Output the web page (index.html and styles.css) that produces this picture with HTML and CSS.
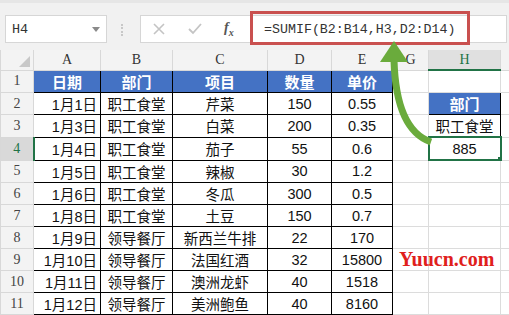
FILE: index.html
```html
<!DOCTYPE html>
<html lang="zh-CN">
  <head>
    <meta charset="UTF-8" />
    <title>SUMIF</title>
    <link rel="stylesheet" href="styles.css">
  </head>
  <body>
    <div class="toolbar">
      <div class="namebox">
        <span>H4</span>
        <span class="caret"></span>
      </div>
      <div class="sep"></div>
      <div class="fbar">
        <div class="ficons">
          <svg width="14" height="14" viewBox="0 0 14 14"><path d="M2 2L12 12M12 2L2 12" stroke="#c4c4c4" stroke-width="1.6" fill="none"/></svg>
          <svg width="16" height="14" viewBox="0 0 16 14"><path d="M2 7L6 11L14 2" stroke="#c4c4c4" stroke-width="1.8" fill="none"/></svg>
          <span class="fx">f<sub>x</sub></span>
        </div>
        <div class="formula">=SUMIF(B2:B14,H3,D2:D14)</div>
      </div>
    </div>
    <div class="redbox"></div>

    <table class="sheet">
      <colgroup>
        <col style="width:33px"><col style="width:67px"><col style="width:72px"><col style="width:95px">
        <col style="width:64px"><col style="width:61px"><col style="width:36px"><col style="width:72px"><col style="width:9px">
      </colgroup>
      <thead>
        <tr>
          <th class="corner"><span class="tri"></span></th>
          <th>A</th><th>B</th><th>C</th><th>D</th><th>E</th><th>G</th><th class="cur">H</th><th></th>
        </tr>
      </thead>
      <tbody id="rows"></tbody>
    </table>

    <svg class="arrow" width="509" height="315" viewBox="0 0 509 315">
      <path d="M431 142 Q396 130 394 60" stroke="#6aab3c" stroke-width="7" fill="none"/>
      <polygon points="394,41 380,62 408,62" fill="#6aab3c"/>
    </svg>
    <div class="mark">Yuucn.com</div>

    <script>
      const data = [
        ["1月1日", "职工食堂", "芹菜", 150, 0.55],
        ["1月3日", "职工食堂", "白菜", 200, 0.35],
        ["1月4日", "职工食堂", "茄子", 55, 0.6],
        ["1月5日", "职工食堂", "辣椒", 30, 1.2],
        ["1月6日", "职工食堂", "冬瓜", 300, 0.5],
        ["1月8日", "职工食堂", "土豆", 150, 0.7],
        ["1月9日", "领导餐厅", "新西兰牛排", 22, 170],
        ["1月10日", "领导餐厅", "法国红酒", 32, 15800],
        ["1月11日", "领导餐厅", "澳洲龙虾", 40, 1518],
        ["1月12日", "领导餐厅", "美洲鲍鱼", 40, 8160],
        ["", "", "", "", ""],
      ];
      const side = { 2: ["hd", "部门"], 3: ["val", "职工食堂"], 4: ["sel", "885"] };

      let html = "";
      for (let r = 1; r <= 12; r++) {
        const head = r === 1;
        const row = head ? ["日期", "部门", "项目", "数量", "单价"] : data[r - 2];
        const cls = head ? "hd" : "d";
        // row 12 only peeks in at the bottom edge, so no label
        html += `<tr><td class="rn${r === 4 ? " cur" : ""}">${r < 12 ? r : ""}</td>`;
        html += `<td class="${cls} ${head ? "" : "right"}">${row[0]}</td>`;
        for (let c = 1; c < 5; c++) html += `<td class="${cls}">${row[c]}</td>`;
        html += `<td></td>`;
        const s = side[r];
        if (s) {
          html += `<td class="${s[0]}">${s[1]}${s[0] === "sel" ? '<span class="handle"></span>' : ""}</td>`;
        } else {
          html += `<td></td>`;
        }
        html += `<td></td></tr>`;
      }
      document.getElementById("rows").innerHTML = html;
    </script>
  </body>
</html>
```

FILE: styles.css
```css
body {
  margin: 0;
  width: 509px;
  height: 315px;
  overflow: hidden;
  background: #fff;
  font-family: "Liberation Sans", "Noto Sans CJK SC", sans-serif;
  position: relative;
}
.toolbar {
  height: 50px;
  box-sizing: border-box;
  background: #f1f1f1;
  border-top: 3px solid #e6e6e6;
  padding: 12px 0 0 5px;
  display: flex;
  align-items: flex-start;
}
.namebox {
  width: 102px;
  height: 28px;
  box-sizing: border-box;
  background: #fff;
  border: 1px solid #d6d6d6;
  display: flex;
  align-items: center;
  justify-content: space-between;
  padding: 0 6px 0 6px;
  font-family: "Liberation Mono", monospace;
  font-size: 13.5px;
  color: #333;
}
.caret {
  width: 0;
  height: 0;
  border-left: 4px solid transparent;
  border-right: 4px solid transparent;
  border-top: 5px solid #8a8a8a;
}
.sep {
  width: 2px;
  height: 12px;
  margin: 9px 15px 0 14px;
  border-left: 2px dotted #c8c8c8;
}
.fbar {
  width: 367px;
  height: 28px;
  box-sizing: border-box;
  background: #fff;
  border: 1px solid #d6d6d6;
  display: flex;
  align-items: center;
}
.ficons {
  width: 108px;
  display: flex;
  align-items: center;
  gap: 21px;
  padding-left: 11px;
  box-sizing: border-box;
}
.fx {
  font-family: "Liberation Serif", serif;
  font-style: italic;
  font-weight: bold;
  font-size: 14px;
  color: #555;
}
.fx sub {
  font-size: 10px;
}
.formula {
  padding-left: 15px;
  font-family: "Liberation Mono", monospace;
  font-size: 13.3px;
  color: #333;
}
.redbox {
  position: absolute;
  left: 250px;
  top: 11px;
  width: 220px;
  height: 34px;
  box-sizing: border-box;
  border: 3px solid #c9504f;
}

.sheet {
  border-collapse: collapse;
  table-layout: fixed;
  width: 509px;
}
.sheet th {
  height: 19px;
  padding: 0;
  background: #f3f3f3;
  border: 1px solid #d8d8d8;
  border-top: none;
  font-family: "Liberation Serif", serif;
  font-weight: normal;
  font-size: 14px;
  color: #333;
}
.sheet th.cur {
  background: #e0e0e0;
  color: #217346;
  border-bottom: 2px solid #217346;
}
.corner {
  position: relative;
}
.tri {
  position: absolute;
  right: 3px;
  bottom: 3px;
  width: 0;
  height: 0;
  border-left: 11px solid transparent;
  border-bottom: 11px solid #c8c8c8;
}
.sheet td {
  height: 21px;
  padding: 0 3px;
  border: 1px solid #dcdcdc;
  font-size: 14.5px;
  color: #111;
  text-align: center;
  white-space: nowrap;
  overflow: hidden;
}
.sheet td.rn {
  background: #f3f3f3;
  border-color: #d8d8d8;
  font-family: "Liberation Serif", serif;
  font-size: 14px;
  color: #444;
  padding: 0;
}
.sheet td.rn.cur {
  background: #d9d9d9;
  color: #217346;
  border-right: 2px solid #217346;
}
.sheet td.d,
.sheet td.val {
  border: 1px solid #000;
}
.sheet td.right {
  text-align: right;
  padding-right: 3px;
}
.sheet td.hd {
  background: #4472c4;
  color: #fff;
  font-weight: bold;
  font-size: 15px;
  border: 1px solid #000;
}
.sheet td.sel {
  position: relative;
  border: 2px solid #217346;
}
.handle {
  position: absolute;
  right: -4px;
  bottom: -4px;
  width: 5px;
  height: 5px;
  background: #217346;
  border: 1px solid #fff;
}
.arrow {
  position: absolute;
  left: 0;
  top: 0;
  pointer-events: none;
}
.mark {
  position: absolute;
  left: 399px;
  top: 248px;
  font-family: "Liberation Serif", serif;
  font-weight: bold;
  font-size: 20px;
  color: #e0201c;
}
```
